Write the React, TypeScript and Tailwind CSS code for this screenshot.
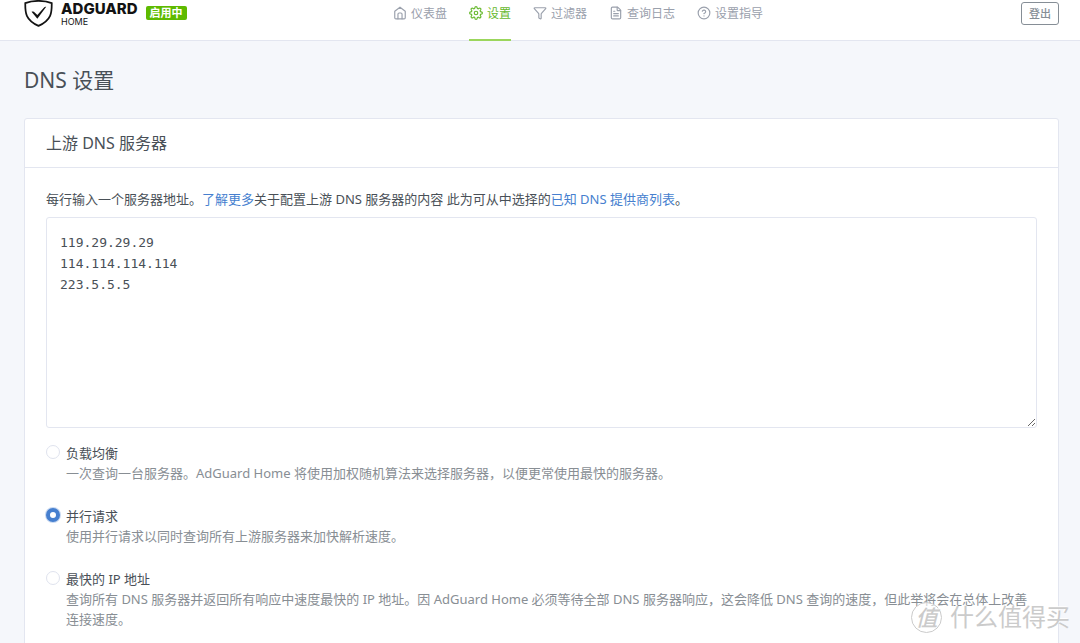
import { useState } from "react";
import { CircleHelp, FileText, Filter } from "lucide-react";
import clsx from "clsx";

type UpstreamMode = "load_balance" | "parallel" | "fastest_addr";

const MODES: { value: UpstreamMode; title: string; desc: string }[] = [
  {
    value: "load_balance",
    title: "负载均衡",
    desc: "一次查询一台服务器。AdGuard Home 将使用加权随机算法来选择服务器，以便更常使用最快的服务器。",
  },
  {
    value: "parallel",
    title: "并行请求",
    desc: "使用并行请求以同时查询所有上游服务器来加快解析速度。",
  },
  {
    value: "fastest_addr",
    title: "最快的 IP 地址",
    desc: "查询所有 DNS 服务器并返回所有响应中速度最快的 IP 地址。因 AdGuard Home 必须等待全部 DNS 服务器响应，这会降低 DNS 查询的速度，但此举将会在总体上改善连接速度。",
  },
];

function HomeIcon({ className }: { className?: string }) {
  return (
    <svg
      viewBox="0 0 24 24"
      fill="none"
      stroke="currentColor"
      strokeWidth="2"
      strokeLinecap="round"
      strokeLinejoin="round"
      className={className}
    >
      <path d="M3 9l9-7 9 7v11a2 2 0 0 1-2 2H5a2 2 0 0 1-2-2z" />
      <path d="M8.500 22v-8a2 2 0 0 1 2-2h3a2 2 0 0 1 2 2v8" />
    </svg>
  );
}

// scalloped cog, rounder than the stock settings icon
function GearIcon({ className }: { className?: string }) {
  return (
    <svg
      viewBox="0 0 24 24"
      fill="none"
      stroke="currentColor"
      strokeWidth="2"
      strokeLinecap="round"
      strokeLinejoin="round"
      className={className}
    >
      <circle cx="12" cy="12" r="3" />
      <path d="M19.400 15a1.650 1.650 0 0 0 .33 1.820l.06.06a2 2 0 1 1-2.830 2.830l-.06-.06a1.650 1.650 0 0 0-2.810 1.180V21a2 2 0 0 1-4 0v-.09A1.650 1.650 0 0 0 7.100 19.730l-.06.06a2 2 0 1 1-2.830-2.830l.06-.06A1.650 1.650 0 0 0 3.090 14H3a2 2 0 0 1 0-4h.09A1.650 1.650 0 0 0 4.270 7.100l-.06-.06a2 2 0 1 1 2.830-2.830l.06.06A1.650 1.650 0 0 0 10 3.090V3a2 2 0 0 1 4 0v.09a1.650 1.650 0 0 0 2.900 1.180l.06-.06a2 2 0 1 1 2.830 2.830l-.06.06A1.650 1.650 0 0 0 20.910 10H21a2 2 0 0 1 0 4h-.09a1.650 1.650 0 0 0-1.510 1z" />
    </svg>
  );
}

const NAV = [
  { label: "仪表盘", Icon: HomeIcon },
  { label: "设置", Icon: GearIcon, active: true },
  { label: "过滤器", Icon: Filter },
  { label: "查询日志", Icon: FileText },
  { label: "设置指导", Icon: CircleHelp },
];

function Logo() {
  return (
    <a href="#" className="flex items-start gap-2 text-[#131313]">
      <svg viewBox="0 0 30 28" fill="none" className="h-7 w-[29px]">
        <path
          d="M15 .4C10.500 .4 5.500 1 1.300 2.700c0 9.300-.4 17 13.700 23.600C29.100 19.700 28.700 12 28.700 2.700 24.500 1 19.500 .4 15 .4z"
          stroke="currentColor"
          strokeWidth="1.800"
        />
        <path
          d="M7.800 11.800c1.500-.9 2.600-.3 3.500.8l2.500 2.500 7.200-8c.7-.7 1.300-.8 2-.5l-9.200 12.400z"
          fill="currentColor"
        />
      </svg>
      <span className="flex flex-col [font-family:Inter,sans-serif]">
        <span className="text-[15px]/[18px] font-extrabold">ADGUARD</span>
        <span className="text-[9px]/2">HOME</span>
      </span>
    </a>
  );
}

function Header() {
  return (
    <header className="border-b border-[#e3e6f0] bg-white">
      <div className="flex h-10 items-start pl-6 pr-[21px]">
        <div className="flex basis-1/3 items-start gap-2">
          <Logo />
          <span className="mt-[6px] rounded-xs bg-[#5eba00] px-1 text-[11px]/[14px] font-bold text-white">
            启用中
          </span>
        </div>
        <nav className="ml-6 flex h-[41px] gap-[22px]">
          {NAV.map(({ label, Icon, active }) => (
            <a
              key={label}
              href="#"
              className={clsx(
                "flex items-start gap-1 border-b-2 pt-[6px] text-[12px]/4 whitespace-nowrap",
                active
                  ? "border-[#9bd65c] text-[#67b92e]"
                  : "border-transparent text-[#9aa0ac]",
              )}
            >
              <Icon className="size-[14px]" />
              {label}
            </a>
          ))}
        </nav>
        <button
          type="button"
          className="ml-auto mt-[2px] h-[23px] rounded-[3px] border border-[#868e96] px-[7px] text-[11px] font-medium text-[#868e96]"
        >
          登出
        </button>
      </div>
    </header>
  );
}

function Watermark() {
  return (
    <div className="pointer-events-none absolute right-[10px] bottom-2 flex items-center gap-2 text-[#cbcbcb] [text-shadow:-1px_-1px_0_#fff]">
      <span className="flex size-[31px] items-center justify-center rounded-full border border-[#cbcbcb] bg-white/60 text-[22px]/8 font-medium italic">
        值
      </span>
      <span className="text-2xl/9">什么值得买</span>
    </div>
  );
}

export default function App() {
  const [mode, setMode] = useState<UpstreamMode>("parallel");
  const [upstreams, setUpstreams] = useState(
    "119.29.29.29\n114.114.114.114\n223.5.5.5",
  );

  return (
    <div className="relative h-screen overflow-hidden bg-[#f5f7fb] [font-family:'Noto_Sans','Noto_Sans_CJK_SC',sans-serif] text-[13px]/5 text-[#495057]">
      <Header />
      <main className="pl-6 pr-[21px]">
        <h1 className="mt-[23px] mb-[22px] text-[21px]/8">DNS 设置</h1>
        <section className="rounded-[3px] border border-[#e3e6f0] bg-white">
          <h2 className="border-b border-[#e3e6f0] px-[21px] py-3 text-base/6">
            上游 DNS 服务器
          </h2>
          <form className="px-[21px] pt-[21px] pb-6">
            <label htmlFor="upstream_dns">
              每行输入一个服务器地址。
              <a href="#" className="text-[#467fcf]">
                了解更多
              </a>
              关于配置上游 DNS 服务器的内容 此为可从中选择的
              <a href="#" className="text-[#467fcf]">
                已知 DNS 提供商列表
              </a>
              。
            </label>
            <textarea
              id="upstream_dns"
              spellCheck={false}
              value={upstreams}
              onChange={(e) => setUpstreams(e.target.value)}
              className="mt-2 block h-[211px] w-full resize rounded-[3px] border border-[#e3e6f0] px-[13px] py-[14px] [font-family:'DejaVu_Sans_Mono',monospace] text-[13px]/[21px] outline-none"
            />
            <div className="mt-[15px] flex flex-col gap-[23px]">
              {MODES.map(({ value, title, desc }) => (
                <label key={value} className="flex items-start gap-[6px]">
                  <input
                    type="radio"
                    name="upstream_mode"
                    value={value}
                    checked={mode === value}
                    onChange={() => setMode(value)}
                    className="mt-[2px] size-[14px] shrink-0 appearance-none rounded-full border border-[#dfe3ee] bg-white checked:border-4 checked:border-[#467fcf] checked:ring-1 checked:ring-[#467fcf]/30"
                  />
                  <span className="flex flex-col">
                    <span>{title}</span>
                    <span className="text-[#888e94]">{desc}</span>
                  </span>
                </label>
              ))}
            </div>
          </form>
        </section>
      </main>
      <Watermark />
    </div>
  );
}
